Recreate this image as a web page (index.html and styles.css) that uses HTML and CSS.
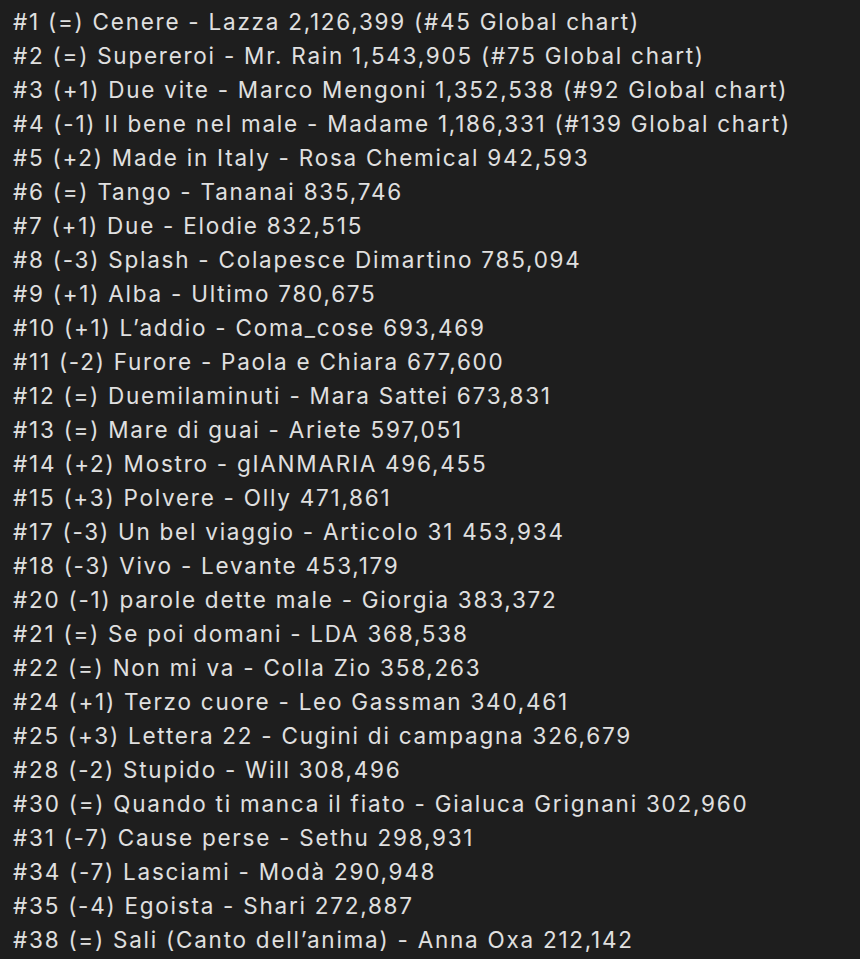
FILE: index.html
```html
<!DOCTYPE html>
<html lang="it">
<head>
<meta charset="utf-8">
<link rel="stylesheet" href="styles.css">
</head>
<body>
<div class="list">
<div class="row">#1 (=) Cenere - Lazza 2,126,399 (#45 Global chart)</div>
<div class="row">#2 (=) Supereroi - Mr. Rain 1,543,905 (#75 Global chart)</div>
<div class="row">#3 (+1) Due vite - Marco Mengoni 1,352,538 (#92 Global chart)</div>
<div class="row">#4 (-1) Il bene nel male - Madame 1,186,331 (#139 Global chart)</div>
<div class="row">#5 (+2) Made in Italy - Rosa Chemical 942,593</div>
<div class="row">#6 (=) Tango - Tananai 835,746</div>
<div class="row">#7 (+1) Due - Elodie 832,515</div>
<div class="row">#8 (-3) Splash - Colapesce Dimartino 785,094</div>
<div class="row">#9 (+1) Alba - Ultimo 780,675</div>
<div class="row">#10 (+1) L’addio - Coma_cose 693,469</div>
<div class="row">#11 (-2) Furore - Paola e Chiara 677,600</div>
<div class="row">#12 (=) Duemilaminuti - Mara Sattei 673,831</div>
<div class="row">#13 (=) Mare di guai - Ariete 597,051</div>
<div class="row">#14 (+2) Mostro - gIANMARIA 496,455</div>
<div class="row">#15 (+3) Polvere - Olly 471,861</div>
<div class="row">#17 (-3) Un bel viaggio - Articolo 31 453,934</div>
<div class="row">#18 (-3) Vivo - Levante 453,179</div>
<div class="row">#20 (-1) parole dette male - Giorgia 383,372</div>
<div class="row">#21 (=) Se poi domani - LDA 368,538</div>
<div class="row">#22 (=) Non mi va - Colla Zio 358,263</div>
<div class="row">#24 (+1) Terzo cuore - Leo Gassman 340,461</div>
<div class="row">#25 (+3) Lettera 22 - Cugini di campagna 326,679</div>
<div class="row">#28 (-2) Stupido - Will 308,496</div>
<div class="row">#30 (=) Quando ti manca il fiato - Gialuca Grignani 302,960</div>
<div class="row">#31 (-7) Cause perse - Sethu 298,931</div>
<div class="row">#34 (-7) Lasciami - Modà 290,948</div>
<div class="row">#35 (-4) Egoista - Shari 272,887</div>
<div class="row">#38 (=) Sali (Canto dell’anima) - Anna Oxa 212,142</div>
</div>
</body>
</html>
```
FILE: styles.css
```css
html, body {
  margin: 0;
  padding: 0;
  background: #1e1e1e;
  height: 100%;
}
.list {
  padding: 5px 0 0 13px;
  font-family: Inter, "Noto Sans", sans-serif;
  font-size: 22.5px;
  line-height: 34px;
  letter-spacing: 1.75px;
  color: #e0e0e0;
  white-space: nowrap;
}
```
